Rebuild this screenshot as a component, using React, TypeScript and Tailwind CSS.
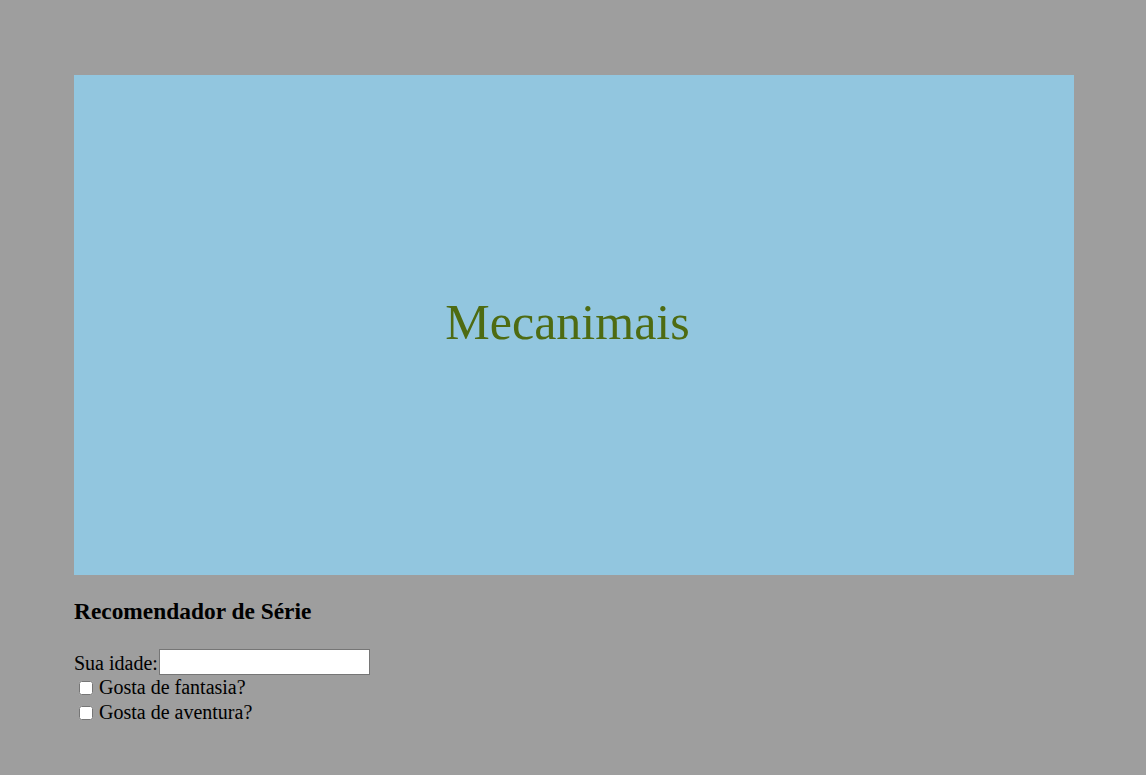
import React from 'react';

export default function App() {
  return (
    <div className="min-h-screen w-full bg-[#9e9e9e] pt-[75px] px-[74px] font-['Liberation_Serif',serif] text-black">
      <div className="w-[1000px] h-[500px] bg-[#92c6df] flex items-center justify-center">
        <h1 className="text-[50px] leading-none text-[#4e6b12] pr-[13px] pb-[6px]">Mecanimais</h1>
      </div>

      <h3 className="mt-[23px] text-[23.4px] font-bold leading-[27px]">Recomendador de Série</h3>

      <form className="mt-[24px] text-[20px] leading-[23px]">
        <div className="flex items-center h-[26px]">
          <label htmlFor="idade" className="pt-[2px] pr-[1px]">Sua idade:</label>
          <input
            id="idade"
            type="text"
            className="w-[211px] h-[26px] bg-white border border-[#767676] px-[2px] outline-none"
          />
        </div>
        <div className="flex items-center h-[25px]">
          <input type="checkbox" className="w-[14px] h-[14px] ml-[5px] mr-[6px] accent-white" />
          <span>Gosta de fantasia?</span>
        </div>
        <div className="flex items-center h-[25px]">
          <input type="checkbox" className="w-[14px] h-[14px] ml-[5px] mr-[6px] accent-white" />
          <span>Gosta de aventura?</span>
        </div>
      </form>
    </div>
  );
}
